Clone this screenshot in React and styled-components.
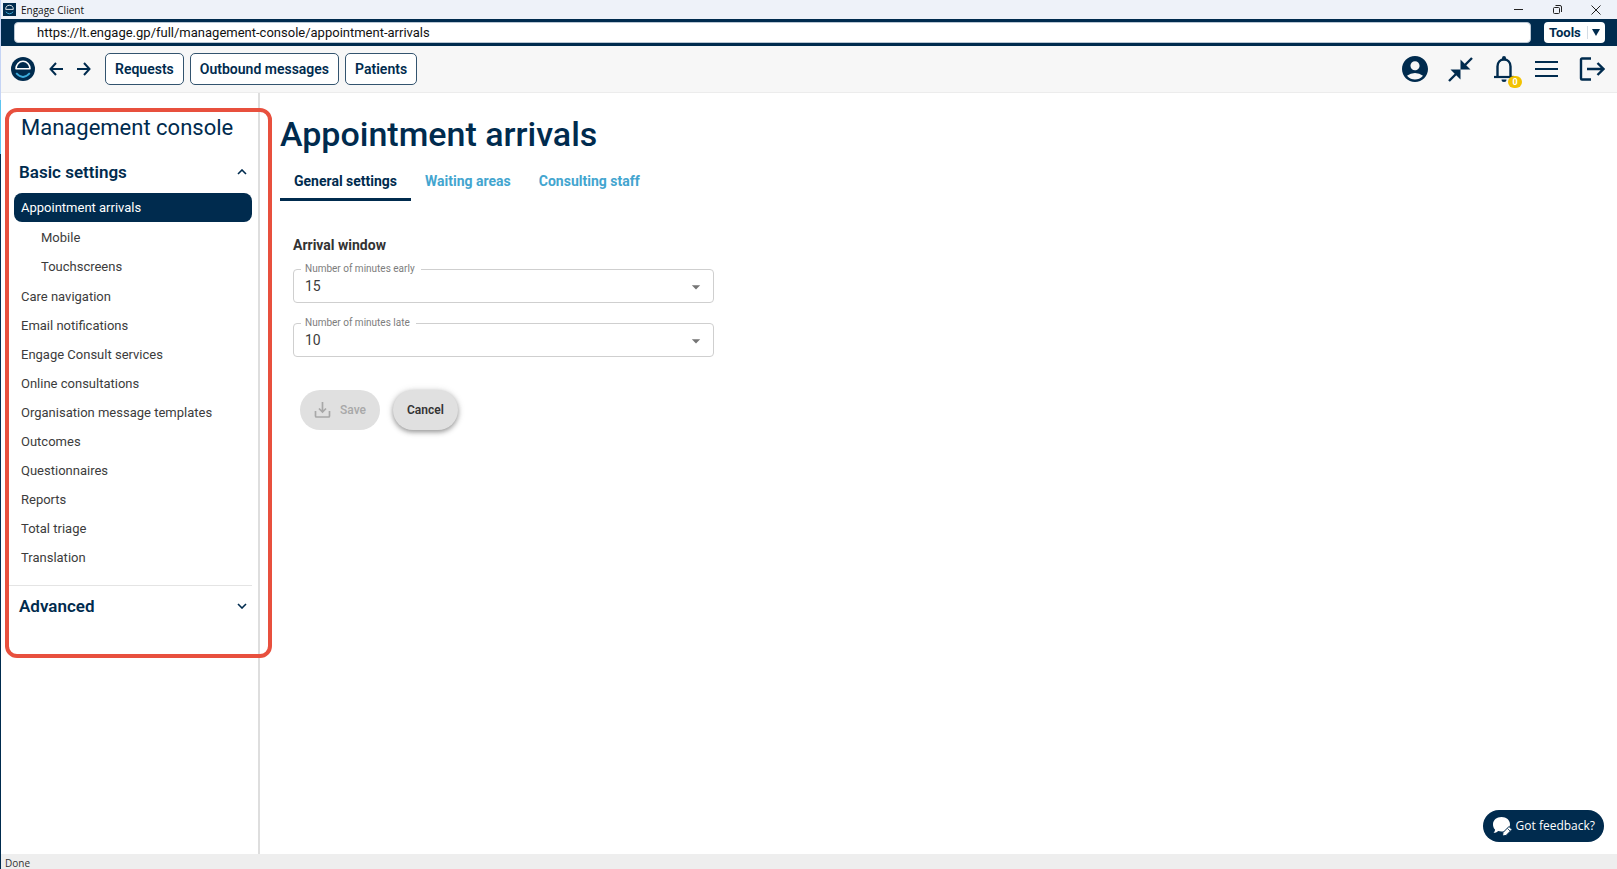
import React, { useState } from "react";
import styled, { createGlobalStyle } from "styled-components";
import { MdAccountCircle, MdArrowDropDown } from "react-icons/md";

const navy = "#002b4e";
const roboto = 'Roboto, "Liberation Sans", sans-serif';
const system = '"Open Sans", "Noto Sans", sans-serif';

const GlobalStyle = createGlobalStyle`
  *, *::before, *::after { box-sizing: border-box; }
  body { margin: 0; background: #fff; font-family: ${roboto}; color: #3c3c3c; }
  button, input, select { font: inherit; color: inherit; }
  h1, h2, h3, ul { margin: 0; padding: 0; }
  ul { list-style: none; }
  svg { display: block; flex: none; }
`;

const Window = styled.div`
  min-height: 100vh;
  display: flex;
  flex-direction: column;
  border-left: 1px solid ${navy};
  border-image: linear-gradient(#c5d4f5 0 101px, #5cc5f0 101px 155px, ${navy} 155px) 1;
`;

const TitleBar = styled.header`
  height: 19px;
  display: flex;
  align-items: center;
  gap: 5px;
  padding: 0 14px 0 2px;
  background: #eef2f9;
  font: 10px/14px ${system};
  color: #111;
`;

const WindowControls = styled.div`
  margin-left: auto;
  display: flex;
  gap: 25px;
`;

const WindowButton = styled.button`
  border: 0;
  padding: 0;
  width: 14px;
  height: 14px;
  background: none;
  color: #222;
  display: grid;
  place-items: center;
`;

const AddressBar = styled.div`
  height: 27px;
  display: flex;
  align-items: center;
  gap: 13px;
  padding: 0 12px 0 13px;
  background: ${navy};
`;

const AddressInput = styled.input`
  flex: 1;
  min-width: 0;
  height: 21px;
  border: 1px solid #b9c6d3;
  border-radius: 4px;
  padding: 0 22px;
  background: #fff;
  color: #111;
  font-size: 13px;
  line-height: 19px;
`;

const ToolsButton = styled.button`
  width: 61px;
  height: 21px;
  border: 0;
  border-radius: 4px;
  padding: 0 5px;
  display: flex;
  align-items: center;
  justify-content: space-between;
  background: #fff;
  color: ${navy};
  font-size: 13px;
  font-weight: 700;
`;

const ToolsArrow = styled.span`
  border-left: 1px solid #d4dce4;
  padding-left: 4px;
  height: 13px;
  display: flex;
  align-items: center;
`;

const Toolbar = styled.nav`
  height: 47px;
  display: flex;
  align-items: center;
  padding: 0 12px 0 10px;
  border-bottom: 1px solid #ececec;
  background: #f7f7f7;
  color: ${navy};
`;

const IconButton = styled.button`
  position: relative;
  border: 0;
  padding: 0;
  background: none;
  color: ${navy};
`;

const HistoryButtons = styled.div`
  display: flex;
  gap: 14px;
  margin: 0 14px;
`;

const PageButtons = styled.div`
  display: flex;
  gap: 6px;
`;

const PageButton = styled.button`
  height: 32px;
  border: 1px solid #33546f;
  border-radius: 5px;
  padding: 0 9px;
  background: #fff;
  color: ${navy};
  font-size: 14px;
  font-weight: 600;
  white-space: nowrap;
`;

const ToolbarIcons = styled.div`
  margin-left: auto;
  display: flex;
  align-items: center;
  gap: 20px;
`;

const Badge = styled.span`
  position: absolute;
  right: -7px;
  bottom: -5px;
  width: 14px;
  height: 12px;
  border-radius: 6px;
  background: #f2c200;
  color: #fff;
  font-size: 9px;
  font-weight: 700;
  line-height: 12px;
  text-align: center;
`;

const Body = styled.div`
  flex: 1;
  display: flex;
`;

const Sidebar = styled.aside`
  flex: none;
  width: 259px;
  border-right: 2px solid #dedede;
  padding: 15px 0 0 4px;
`;

const Highlight = styled.div`
  position: relative;
  width: 267px;
  min-height: 550px;
  border: 4px solid #e8503e;
  border-radius: 12px;
  padding-right: 16px;
`;

const SidebarTitle = styled.h2`
  padding-left: 12px;
  margin-bottom: 8px;
  font-size: 22px;
  font-weight: 400;
  line-height: 32px;
  color: ${navy};
`;

const SectionToggle = styled.button`
  width: 100%;
  height: 40px;
  border: 0;
  padding: 0 5px 0 10px;
  display: flex;
  align-items: center;
  justify-content: space-between;
  background: none;
  color: ${navy};
  font-size: 17px;
  font-weight: 600;
`;

const Menu = styled.ul`
  padding: 1px 0 0 5px;
`;

const SubMenu = styled.ul`
  padding: 1px 0;
`;

const MenuLink = styled.a`
  display: block;
  height: 29px;
  padding-left: ${(p) => (p.$nested ? 27 : 7)}px;
  border-radius: 8px;
  background: ${(p) => (p.$active ? navy : "transparent")};
  color: ${(p) => (p.$active ? "#fff" : "#3c3c3c")};
  font-size: 13px;
  line-height: 29px;
  text-decoration: none;
`;

const Divider = styled.hr`
  margin: 13px 0 0;
  border: 0;
  border-top: 1px solid #e4e4e4;
`;

const Main = styled.main`
  flex: 1;
  min-width: 0;
  padding: 20px;
`;

const PageTitle = styled.h1`
  font-size: 34px;
  font-weight: 500;
  line-height: 42px;
  color: ${navy};
`;

const Tabs = styled.div`
  display: flex;
  margin-top: 8px;
`;

const Tab = styled.button`
  height: 38px;
  border: 0;
  border-bottom: 3px solid ${(p) => (p.$active ? navy : "transparent")};
  padding: 0 14px;
  background: none;
  color: ${(p) => (p.$active ? navy : "#43a5cf")};
  font-size: 14px;
  font-weight: 700;
`;

const Form = styled.form`
  max-width: 447px;
  padding: 35px 13px 0;
`;

const FormTitle = styled.h3`
  font-size: 14px;
  font-weight: 700;
  line-height: 18px;
  color: #333;
`;

const Field = styled.div`
  position: relative;
  margin-top: ${(p) => (p.$first ? 15 : 20)}px;
`;

const FieldLabel = styled.label`
  position: absolute;
  left: 8px;
  top: -7px;
  padding: 0 6px 0 4px;
  background: #fff;
  color: #7d7d7d;
  font-size: 10px;
  line-height: 14px;
`;

const Select = styled.select`
  display: block;
  width: 100%;
  height: 34px;
  appearance: none;
  border: 1px solid #cfcfcf;
  border-radius: 4px;
  padding: 0 11px;
  background: #fff;
  color: #3c3c3c;
  font-size: 14px;
`;

const SelectArrow = styled.span`
  position: absolute;
  right: 8px;
  top: 8px;
  color: #757575;
  pointer-events: none;
`;

const Actions = styled.div`
  display: flex;
  gap: 13px;
  margin: 33px 7px 0;
`;

const ActionButton = styled.button`
  height: 40px;
  border: 0;
  border-radius: 20px;
  padding: 0 14px;
  display: flex;
  align-items: center;
  gap: 9px;
  background: #e0e0e0;
  color: #333;
  font-size: 12px;
  font-weight: 600;
  box-shadow: ${(p) => (p.$raised ? "0 2px 5px rgba(0,0,0,.36), 0 1px 9px rgba(0,0,0,.12)" : "none")};
  &:disabled { color: #a8a8a8; font-weight: 500; }
`;

const FeedbackButton = styled.button`
  position: fixed;
  right: 13px;
  bottom: 27px;
  height: 32px;
  border: 0;
  border-radius: 16px;
  padding: 0 9px;
  display: flex;
  align-items: center;
  gap: 4px;
  background: ${navy};
  color: #fff;
  font: 12px/16px ${system};
`;

const StatusBar = styled.footer`
  height: 15px;
  padding-left: 4px;
  background: #eee;
  font: 10px/18px ${system};
  color: #333;
`;

function Logo({ size, square }) {
  return (
    <svg width={size} height={size} viewBox="0 0 24 24" fill="none" aria-hidden="true">
      {square ? <rect width="24" height="24" fill={navy} /> : <circle cx="12" cy="12" r="12" fill={navy} />}
      <path d="M5 11.8a7 7.6 0 0 1 14 0Z" stroke="#fff" strokeWidth="1.6" strokeLinejoin="round" />
      <path d="M5.2 16.2q6.8 7.6 13.6 0" stroke="#3cabdc" strokeWidth="1.8" />
    </svg>
  );
}

function Stroke({ width = 24, height = 24, weight = 2, children }) {
  return (
    <svg width={width} height={height} viewBox={`0 0 ${width} ${height}`} fill="none" stroke="currentColor" strokeWidth={weight} aria-hidden="true">
      {children}
    </svg>
  );
}

const menu = [
  { name: "Appointment arrivals", children: ["Mobile", "Touchscreens"] },
  { name: "Care navigation" },
  { name: "Email notifications" },
  { name: "Engage Consult services" },
  { name: "Online consultations" },
  { name: "Organisation message templates" },
  { name: "Outcomes" },
  { name: "Questionnaires" },
  { name: "Reports" },
  { name: "Total triage" },
  { name: "Translation" },
];

function MinutesField({ id, label, value, first }) {
  return (
    <Field $first={first}>
      <Select id={id} defaultValue={value}>
        {[5, 10, 15, 20, 30].map((n) => (
          <option key={n}>{n}</option>
        ))}
      </Select>
      <FieldLabel htmlFor={id}>{label}</FieldLabel>
      <SelectArrow><MdArrowDropDown size={20} /></SelectArrow>
    </Field>
  );
}

export default function App() {
  const [tab, setTab] = useState("General settings");
  return (
    <Window>
      <GlobalStyle />
      <TitleBar>
        <Logo size={13} square />
        Engage Client
        <WindowControls>
          <WindowButton aria-label="Minimise"><Stroke width={10} height={10} weight={1}><path d="M1 4.5h9" /></Stroke></WindowButton>
          <WindowButton aria-label="Restore"><Stroke width={10} height={10} weight={1}><rect x="1.5" y="2.5" width="6" height="6" rx="1" /><path d="M3.5.5H8a1.500 1.500 0 0 1 1.500 1.500v5" /></Stroke></WindowButton>
          <WindowButton aria-label="Close"><Stroke width={10} height={10} weight={1}><path d="m.5.5 9 9m0-9-9 9" /></Stroke></WindowButton>
        </WindowControls>
      </TitleBar>
      <AddressBar>
        <AddressInput aria-label="Address" defaultValue="https://lt.engage.gp/full/management-console/appointment-arrivals" />
        <ToolsButton>
          Tools
          <ToolsArrow><svg width="8" height="7" viewBox="0 0 8 7" fill="currentColor" aria-hidden="true"><path d="M0 0h8L4 7Z" /></svg></ToolsArrow>
        </ToolsButton>
      </AddressBar>
      <Toolbar>
        <Logo size={24} />
        <HistoryButtons>
          <IconButton aria-label="Back"><Stroke width={14} height={14}><path d="M14 7H1.500M7 1 1.500 7 7 13" /></Stroke></IconButton>
          <IconButton aria-label="Forward"><Stroke width={14} height={14}><path d="M0 7h12.500M7 1l5.500 6L7 13" /></Stroke></IconButton>
        </HistoryButtons>
        <PageButtons>
          <PageButton>Requests</PageButton>
          <PageButton>Outbound messages</PageButton>
          <PageButton>Patients</PageButton>
        </PageButtons>
        <ToolbarIcons>
          <IconButton aria-label="Account"><MdAccountCircle size={26} viewBox="2 2 20 20" /></IconButton>
          <IconButton aria-label="Collapse">
            <Stroke width={25} height={25}>
              <path d="m24 1-8 8M1 24l8-8" strokeWidth="2.4" />
              <path fill="currentColor" stroke="none" d="M12.500 2.500v10h10ZM2.500 12.500h10v10Z" />
            </Stroke>
          </IconButton>
          <IconButton aria-label="Notifications">
            <Stroke width={22} height={28}>
              <path d="M4.500 21.500V11.500C4.500 7 7.500 4.500 11 4.500s6.500 2.500 6.500 7v10" strokeWidth="2.400" />
              <path d="M1 22h20" strokeWidth="2.200" />
              <path fill="currentColor" stroke="none" d="M9 4.500V3a2 2 0 0 1 4 0v1.500ZM8.500 24.500h5a2.500 2.500 0 0 1-5 0Z" />
            </Stroke>
            <Badge>0</Badge>
          </IconButton>
          <IconButton aria-label="Menu"><Stroke width={24} height={18}><path d="M0 2h23M0 9h23M0 16h23" strokeWidth="2.200" /></Stroke></IconButton>
          <IconButton aria-label="Log out"><Stroke width={26} height={24}><path d="M12 1.500H3a1 1 0 0 0-1 1v19a1 1 0 0 0 1 1h9M8 12h16M18.500 6l6 6-6 6" strokeWidth="2.400" /></Stroke></IconButton>
        </ToolbarIcons>
      </Toolbar>
      <Body>
        <Sidebar>
          <Highlight>
            <SidebarTitle>Management console</SidebarTitle>
            <SectionToggle aria-expanded="true">
              Basic settings
              <Stroke width={10} height={6}><path d="m1 5 4-4 4 4" strokeWidth="1.600" /></Stroke>
            </SectionToggle>
            <Menu>
              {menu.map((item, i) => (
                <li key={item.name}>
                  <MenuLink href="#" $active={i === 0}>{item.name}</MenuLink>
                  {item.children && (
                    <SubMenu>
                      {item.children.map((name) => (
                        <li key={name}><MenuLink href="#" $nested>{name}</MenuLink></li>
                      ))}
                    </SubMenu>
                  )}
                </li>
              ))}
            </Menu>
            <Divider />
            <SectionToggle aria-expanded="false">
              Advanced
              <Stroke width={10} height={6}><path d="m1 1 4 4 4-4" strokeWidth="1.600" /></Stroke>
            </SectionToggle>
          </Highlight>
        </Sidebar>
        <Main>
          <PageTitle>Appointment arrivals</PageTitle>
          <Tabs role="tablist">
            {["General settings", "Waiting areas", "Consulting staff"].map((name) => (
              <Tab key={name} role="tab" aria-selected={tab === name} $active={tab === name} onClick={() => setTab(name)}>{name}</Tab>
            ))}
          </Tabs>
          <Form onSubmit={(e) => e.preventDefault()}>
            <FormTitle>Arrival window</FormTitle>
            <MinutesField id="early" label="Number of minutes early" value="15" first />
            <MinutesField id="late" label="Number of minutes late" value="10" />
            <Actions>
              <ActionButton disabled>
                <Stroke width={17} height={16} weight={1.7}><path d="M1.500 9v5a1 1 0 0 0 1 1h12a1 1 0 0 0 1-1V9M8.500 0v10M5 6.500l3.500 3.500 3.500-3.500" /></Stroke>
                Save
              </ActionButton>
              <ActionButton type="button" $raised>Cancel</ActionButton>
            </Actions>
          </Form>
        </Main>
      </Body>
      <StatusBar>Done</StatusBar>
      <FeedbackButton>
        <svg width="20" height="21" viewBox="0 0 20 21" aria-hidden="true">
          <path fill="#fff" d="M9.500 1c5 0 8.500 3.200 8.500 7.200s-3.500 7.300-8.500 7.300c-1.200 0-2.300-.2-3.300-.5C5 16.300 3.300 17 1.500 17c1-1 1.500-2.300 1.500-3.500C1.500 12 1 10.300 1 8.200 1 4.200 4.500 1 9.500 1Z" />
          <path fill="#fff" stroke={navy} strokeWidth="1" d="m11 16.500 6-6 3 3-6 6-3.500.5Z" />
          <path stroke={navy} strokeWidth=".8" d="m15.500 12.500 2.500 2.500" />
        </svg>
        Got feedback?
      </FeedbackButton>
    </Window>
  );
}
